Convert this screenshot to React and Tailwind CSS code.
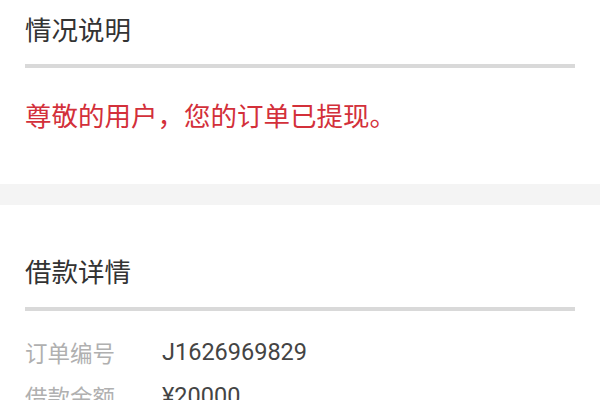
export default function App() {
  const font = { fontFamily: '"Noto Sans CJK SC", "Noto Sans", sans-serif' };
  return (
    <div className="w-[600px] h-[400px] bg-white overflow-hidden" style={font}>
      <div className="px-[25px]">
        <div className="h-[64px] pt-[16px]">
          <h2 className="text-[26.5px] leading-[26px] text-[#333333] font-normal">情况说明</h2>
        </div>
        <div className="h-[4px] bg-[#d9d9d9]" />
        <div className="h-[116px] pt-[34px]">
          <p className="text-[26.5px] leading-[26px] text-[#d3303a]">尊敬的用户，您的订单已提现。</p>
        </div>
      </div>
      <div className="h-[21px] bg-[#f4f4f4]" />
      <div className="px-[25px]">
        <div className="h-[102px] pt-[53px]">
          <h2 className="text-[26.5px] leading-[26px] text-[#333333] font-normal">借款详情</h2>
        </div>
        <div className="h-[4px] bg-[#d9d9d9]" />
        <div className="flex flex-col pt-[29px] gap-[20px]">
          <div className="flex items-center text-[22.5px] leading-[24px]">
            <span className="w-[137px] text-[#b0b0b0]">订单编号</span>
            <span className="text-[23.5px] text-[#444444]" style={{ fontFamily: 'Roboto, "Noto Sans CJK SC", sans-serif' }}>J1626969829</span>
          </div>
          <div className="flex items-center text-[22.5px] leading-[24px]">
            <span className="w-[137px] text-[#b0b0b0]">借款金额</span>
            <span className="text-[23.5px] text-[#444444]" style={{ fontFamily: 'Roboto, "Noto Sans CJK SC", sans-serif' }}>¥20000</span>
          </div>
        </div>
      </div>
    </div>
  );
}
